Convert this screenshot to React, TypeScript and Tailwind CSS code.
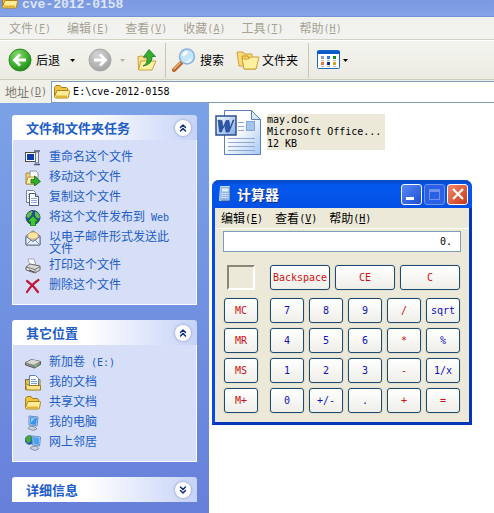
import React from 'react';
import { ChevronsDown, ChevronsUp } from 'lucide-react';

const Latin: React.FC<{ children: React.ReactNode }> = ({ children }) => (
  <span className="font-['DejaVu_Sans_Mono',monospace] text-[10px] whitespace-pre">{children}</span>
);

const MenuItem: React.FC<{ label: string; hotkey: string }> = ({ label, hotkey }) => (
  <button className="flex items-center whitespace-nowrap">
    {label}
    <Latin>
      (<u>{hotkey}</u>)
    </Latin>
  </button>
);

/* ---------- icons ---------- */

const FolderIcon = ({ className = 'w-4 h-4', viewBox = '0 0 16 16' }) => (
  <svg className={className} viewBox={viewBox}>
    <path d="M.5 12.500v-9l1.500-2h4l1.500 2h5l1 1v3" fill="#f0c440" stroke="#a87c14" />
    <path d="M3 6.500h12q.7 0 .5 1l-1 5.500q-.2 1-1 1H2q-1.500 0-1.500-1.500z" fill="#ffec96" stroke="#b0841a" />
    <path d="M2 12.500h11" stroke="#e3b32e" strokeWidth="2" />
  </svg>
);

const ArrowCircle = ({ forward = false }) => (
  <svg className="w-6 h-6 shrink-0" viewBox="0 0 24 24">
    <defs>
      <radialGradient id={forward ? 'circle-off' : 'circle-on'} cx="0.4" cy="0.3" r="0.8">
        <stop offset="0" stopColor={forward ? '#d6d6d6' : '#8cdc70'} />
        <stop offset="0.6" stopColor={forward ? '#b4b4b4' : '#3aac2c'} />
        <stop offset="1" stopColor={forward ? '#9a9a9a' : '#1c7a18'} />
      </radialGradient>
    </defs>
    <circle cx="12" cy="12" r="11" fill={forward ? 'url(#circle-off)' : 'url(#circle-on)'} stroke={forward ? '#a8a8a8' : '#2c8a24'} />
    {forward ? (
      <path d="M6 12h11M12 6.500l5.500 5.500-5.500 5.500" fill="none" stroke="#fff" strokeWidth="2.800" />
    ) : (
      <path d="M18 12H7M12 6.500 6.500 12l5.500 5.500" fill="none" stroke="#fff" strokeWidth="2.800" />
    )}
  </svg>
);

const Caret = ({ className = 'text-black' }) => (
  <svg className={`w-[5px] h-[3px] shrink-0 ${className}`} viewBox="0 0 5 3">
    <path d="M0 0h5L2.500 3z" fill="currentColor" />
  </svg>
);

const UpIcon = () => (
  <svg className="w-5 h-6 shrink-0" viewBox="0 0 20 24">
    <path d="M1 8.500 6 8l1 2h7v11H1.500z" fill="#f8e08a" stroke="#c9a33a" />
    <path d="M1.500 22 4 13h15l-4 9z" fill="#fff0a4" stroke="#c9a33a" />
    <path d="M6 18q5-2 4-9H6.500L12 1.500l6.500 7H15q.5 8-9 9.500z" fill="#35ae32" stroke="#15761a" strokeWidth="0.800" />
  </svg>
);

const SearchIcon = () => (
  <svg className="w-6 h-6 shrink-0" viewBox="0 0 24 24">
    <path d="m2 22 7-7" stroke="#b7682c" strokeWidth="4" strokeLinecap="round" />
    <path d="m2 21 6-6" stroke="#f0b070" strokeWidth="1.500" strokeLinecap="round" />
    <circle cx="15" cy="8.500" r="7.500" fill="#c4e6fb" stroke="#8bb0dc" strokeWidth="1.500" />
    <path d="M10 8q1-5 6-5-1 5-6 5z" fill="#fff" />
    <path d="M19 11q-2 3-5 3" stroke="#f2fbff" fill="none" strokeWidth="1.500" />
  </svg>
);

const FoldersIcon = () => (
  <svg className="w-6 h-6 shrink-0" viewBox="0 0 24 24">
    <path d="M1 4h6l1 2h8v12H3z" fill="#f9dc78" stroke="#cda038" />
    <path d="M6 8h6l1 2h7v11H8z" fill="#f6d260" stroke="#c79a30" />
    <path d="M6 10q5 3 9-1h8l-3 12H8z" fill="#fff0a0" stroke="#cda038" />
  </svg>
);

const ViewsIcon = () => (
  <svg className="w-6 h-5 shrink-0" viewBox="0 0 24 20">
    <rect x="0.500" y="0.500" width="22" height="18" rx="1" fill="#fff" stroke="#1c66c4" />
    <path d="M0 1h23v3H0z" fill="#0a5bcb" />
    <path d="M4 6h3v3H4z" fill="#9c94c4" />
    <path d="M10 6h3v3h-3z" fill="#2a78d8" />
    <path d="M16 6h3v3h-3z" fill="#138a1a" />
    <path d="M4 12h3v3H4z" fill="#ee7444" />
    <path d="M10 12h3v3h-3z" fill="#0b2a90" />
    <path d="M16 12h3v3h-3z" fill="#d5a01c" />
    <path d="M4 10.500h3m3 0h3m3 0h3M4 16.500h3m3 0h3m3 0h3" stroke="#b8b8b8" />
  </svg>
);

const RenameIcon = () => (
  <svg className="w-4 h-4" viewBox="0 0 16 16">
    <rect x="0.500" y="2.500" width="10" height="9" fill="#fff" stroke="#4a4a4a" />
    <rect x="2" y="4" width="7" height="6" fill="#0c3aa8" />
    <path d="M10.500 2v11h3V2z" fill="#e6ebf8" stroke="#6a7490" />
    <path d="M9 1h6M9 14.500h6" fill="none" stroke="#4c5878" strokeWidth="1.500" />
  </svg>
);

const MoveIcon = () => (
  <svg className="w-4 h-4" viewBox="0 0 16 16">
    <path d="M1 3h4l1 1h6v10H1z" fill="#f2d472" stroke="#a58a3c" />
    <path d="M5 1h6l2 2v6H5z" fill="#fff" stroke="#8a93a8" />
    <path d="M1 14 3 7h9l-2 7z" fill="#fdf0b0" stroke="#b5963e" />
    <path d="M6 9.500h3.500V6l6 5.500-6 4.500v-3H6z" fill="#2fae2a" stroke="#14701a" strokeWidth="0.800" />
  </svg>
);

const CopyIcon = () => (
  <svg className="w-4 h-4" viewBox="0 0 16 16">
    <path d="M1.500 .5h7l2 2v10h-9z" fill="#fff" stroke="#7483a8" />
    <path d="M4.500 3.500h6l3 3v9h-9z" fill="#fff" stroke="#4a5a88" />
    <path d="M10.500 3.500v3h3" fill="#c8d4ee" stroke="#4a5a88" />
    <path d="M6 8.500h6M6 10.500h6M6 12.500h6M3 4.500h1M3 6.500h1M3 8.500h1" stroke="#8fa6d6" />
  </svg>
);

const PublishIcon = () => (
  <svg className="w-4 h-4" viewBox="0 0 16 16">
    <circle cx="8" cy="7.500" r="7" fill="#245090" stroke="#284c78" />
    <path d="M1.500 5q3-4 6-4l-1 4-3 3-2-1zM10 1.500q4 1 5 6l-3 1-2-3z" fill="#5fc04c" />
    <path d="M8 6 13.500 11.500H10.500V16h-5v-4.500h-3z" fill="#3ec832" stroke="#14701a" strokeWidth="0.800" />
  </svg>
);

const MailIcon = () => (
  <svg className="w-4 h-4" viewBox="0 0 16 16">
    <path d="M1 6 8 .8 15 6v9H1z" fill="#b9cdf0" stroke="#64748f" />
    <path d="M3 4q5-4 10 0v5H3z" fill="#ffe6a4" stroke="#d49a4c" strokeWidth="0.800" />
    <path d="M1 15V6.500l7 5 7-5V15z" fill="#e6effc" stroke="#64748f" />
    <path d="m1 15 5-5m9 5-5-5" stroke="#7f90ae" />
  </svg>
);

const PrintIcon = () => (
  <svg className="w-4 h-4" viewBox="0 0 16 16">
    <path d="M3 1h6l2 6H5z" fill="#fff" stroke="#a0a8bc" />
    <path d="m1 9 4-3 10 2v4l-5 3-9-3z" fill="#d9d9d6" stroke="#6c6c6c" />
    <path d="m1 9 9 2.500 5-3M10 11.500V15" fill="none" stroke="#777" />
    <path d="m4 12 5 2" stroke="#444" />
  </svg>
);

const DeleteIcon = () => (
  <svg className="w-4 h-4" viewBox="0 0 16 16">
    <path d="M2 3q6 4 11 11M13.500 2Q7 6 2 14" fill="none" stroke="#c01838" strokeWidth="2.200" strokeLinecap="round" />
  </svg>
);

const DriveIcon = () => (
  <svg className="w-4 h-4" viewBox="0 0 16 16">
    <path d="m0.500 7.500 6-3 9 2v3l-6 3.500-9-3z" fill="#8c8c88" stroke="#5d5d5d" />
    <path d="m1 7.500 6-3 8 2-6 3.200z" fill="#d8d8d4" />
    <path d="m10 11 2-1" stroke="#5ae04c" strokeWidth="1.500" />
  </svg>
);

const DocumentsIcon = () => (
  <svg className="w-4 h-4" viewBox="0 0 16 16">
    <path d="M.5 4.500h4v10h-4z" fill="#e8c04c" stroke="#8c6a18" />
    <path d="M11 4.500h4v8h-4z" fill="#f4d668" stroke="#a07a1c" />
    <path d="M4.500 .5h6l3 3v9h-9z" fill="#fff" stroke="#5a82b8" />
    <path d="M6 4.500h5M6 6.500h6M6 8.500h6" stroke="#74a0dc" />
    <path d="M.5 8.500 4 10.500h11.500v4.500H1.500z" fill="#fbe48c" stroke="#a07a1c" />
  </svg>
);

const ComputerIcon = () => (
  <svg className="w-4 h-4" viewBox="0 0 16 16">
    <path d="m4 1 9 1-1 9-8-1z" fill="#dfe8f8" stroke="#6a88bc" />
    <path d="m5 2 7 .8-.8 7.200-6-.8z" fill="#3894ee" />
    <path d="m6 3 4 .5-4 4z" fill="#8cd0ff" />
    <path d="m5 11 5 1 2 2-4 1.500-5-2z" fill="#c9cfdd" stroke="#7884a0" strokeWidth="0.800" />
  </svg>
);

const NetworkIcon = () => (
  <svg className="w-4 h-4" viewBox="0 0 16 16">
    <circle cx="4.500" cy="5" r="4.300" fill="#1f5cac" stroke="#24507c" strokeWidth="0.800" />
    <path d="M.5 4q2-4 6-3l-1 6-3 1z" fill="#3fac34" />
    <path d="m7 1 8.500 1-1 9-7-1z" fill="#dfe8f8" stroke="#6a88bc" />
    <path d="m8 2 6.500.8-.8 7.200-5.200-.8z" fill="#48a2f2" />
    <path d="m6 12 5-1 3 2.500-4 2-5-2z" fill="#c9cfdd" stroke="#7884a0" strokeWidth="0.800" />
  </svg>
);

const WordDocIcon = () => (
  <svg className="w-[46px] h-[46px] shrink-0" viewBox="0 0 46 46">
    <defs>
      <linearGradient id="doc-page" x1="0" y1="0" x2="1" y2="1">
        <stop offset="0.400" stopColor="#fff" />
        <stop offset="1" stopColor="#a8c8f4" />
      </linearGradient>
      <linearGradient id="doc-badge" x1="0" y1="0" x2="1" y2="1">
        <stop offset="0" stopColor="#fff" />
        <stop offset="1" stopColor="#7fa8e4" />
      </linearGradient>
    </defs>
    <path d="M9.500 .5h27l9 9v35h-36z" fill="url(#doc-page)" stroke="#5b7fb4" />
    <path d="M36.500 .5v9h9z" fill="#dbe8fa" stroke="#5b7fb4" />
    <path d="M23 12.500h6m-6 4h6m-6 4h6M13 28.500h27M13 32.500h27M13 36.500h27M13 40.500h27" stroke="#92a8d4" />
    <rect x="31.500" y="11.500" width="8" height="9" fill="#a4c4ee" stroke="#84a6dc" />
    <rect x="1" y="6" width="20" height="19" fill="url(#doc-badge)" stroke="#2a4f94" strokeWidth="1.500" />
    <path d="m3 10 4 .5 1 7.500 3-7.500h3l1 7.500 3-8h1l-5 12h-3l-1.500-7L6.500 22h-2z" fill="#2b57a8" stroke="#1c3f88" strokeWidth="0.600" />
  </svg>
);

const CalcIcon = () => (
  <svg className="w-4 h-4 shrink-0" viewBox="0 0 16 16">
    <path d="M3.500 .5h9v14h-10z" fill="#8fb4ea" stroke="#c8dcf8" />
    <path d="M5 2.500h6.500v3H5z" fill="#dff0ff" />
    <path d="M4.500 7.500h7M4.500 9.500h7M4.500 11.500h7" stroke="#f2f8ff" strokeDasharray="2 1" />
    <path d="M13 1v14H4" stroke="#24509c" fill="none" />
  </svg>
);

/* ---------- side panel ---------- */

interface TaskPanelProps {
  title: string;
  open?: boolean;
  children?: React.ReactNode;
}

const TaskPanel: React.FC<TaskPanelProps> = ({ title, open = true, children }) => (
  <section>
    <button
      aria-expanded={open}
      className="w-full h-[25px] pl-3.5 pr-1.5 flex items-center justify-between rounded-t-[3px] bg-linear-to-r from-white from-40% to-[#c6d3f7] text-[13px] font-bold text-[#215dc6]"
    >
      {title}
      <span className="w-4 h-4 rounded-full bg-white flex items-center justify-center shadow-[0_0_2px_1px_#a8b4d8] text-[#10307c]">
        {open ? <ChevronsUp size={12} strokeWidth={3} /> : <ChevronsDown size={12} strokeWidth={3} />}
      </span>
    </button>
    {open && (
      <ul className="flex flex-col gap-1 bg-[#d6dff7] border border-t-0 border-white px-3 py-2.5 text-[12px] leading-[12px] text-[#215dc6]">
        {children}
      </ul>
    )}
  </section>
);

const Task: React.FC<{ icon: React.ReactNode; children: React.ReactNode }> = ({ icon, children }) => (
  <li>
    <a href="#" className="flex gap-2 min-h-4">
      <span className="w-4 h-4 shrink-0">{icon}</span>
      <span className="max-w-[125px]">{children}</span>
    </a>
  </li>
);

/* ---------- calculator ---------- */

const KEYS = [
  ['7', '8', '9', '/', 'sqrt'],
  ['4', '5', '6', '*', '%'],
  ['1', '2', '3', '-', '1/x'],
  ['0', '+/-', '.', '+', '='],
];
const MEMORY = ['MC', 'MR', 'MS', 'M+'];
const OPERATORS = ['/', '*', '-', '+', '='];

const Key: React.FC<{ label: string; red?: boolean }> = ({ label, red }) => (
  <button
    className={`h-[25px] w-full flex items-center justify-center rounded-[3px] border border-[#1c4a70] bg-linear-to-b from-white to-[#efeee8] shadow-[0_0_0_1px_#e0dfd2] font-['DejaVu_Sans_Mono',monospace] text-[10px] ${
      red ? 'text-[#d01010]' : 'text-[#1010c0]'
    }`}
  >
    {label}
  </button>
);

const Calculator = () => (
  <div className="absolute left-[212px] top-[180px] w-[260px] rounded-t-[7px] border-3 border-t-0 border-l-[#0a4ae4] border-r-[#0636b8] border-b-[#0636b8] bg-[#ece9d8]">
    <div className="-mx-[3px] h-7 pl-[5px] pr-1 flex items-center gap-1 rounded-t-[7px] bg-linear-to-b from-[#0a46c0] via-[#0458ee] via-20% to-[#0450e4] text-white">
      <CalcIcon />
      <h2 className="flex-1 text-[14px] font-bold leading-[16px] [text-shadow:1px_1px_#0a2a80]">计算器</h2>
      <div className="flex gap-[2px]">
        <button aria-label="最小化" className="w-[21px] h-[21px] rounded-[3px] border border-white bg-linear-to-br from-[#5a88f4] to-[#1c4cd4] flex items-end p-1">
          <span className="w-2 h-[3px] bg-white" />
        </button>
        <button aria-label="最大化" disabled className="w-[21px] h-[21px] rounded-[3px] border border-[#6c92ee] bg-[#2a60e4] flex items-center justify-center">
          <span className="w-[11px] h-[11px] border border-t-3 border-[#6e90ec]" />
        </button>
        <button aria-label="关闭" className="w-[21px] h-[21px] rounded-[3px] border border-white bg-linear-to-br from-[#f08868] to-[#c83410] flex items-center justify-center">
          <svg className="w-3 h-3" viewBox="0 0 12 12">
            <path d="m1 1 10 10M11 1 1 11" stroke="#fff" strokeWidth="2.200" />
          </svg>
        </button>
      </div>
    </div>
    <nav className="h-[21px] pl-1.5 flex items-center gap-3 border-b border-white text-[12px]">
      <MenuItem label="编辑" hotkey="E" />
      <MenuItem label="查看" hotkey="V" />
      <MenuItem label="帮助" hotkey="H" />
    </nav>
    <div className="px-2 pt-[2px] pb-[9px]">
      <input
        aria-label="显示"
        readOnly
        value="0."
        className="block w-full h-[21px] mb-[13px] pr-2 bg-white border border-[#7f9db9] text-right font-['DejaVu_Sans_Mono',monospace] text-[10px] outline-none"
      />
      <div className="px-px flex flex-col gap-2">
        <div className="flex gap-3">
          <div className="w-[34px] px-[3px]">
            <div className="h-[25px] border-2 border-[#8a877a] border-r-white border-b-white" />
          </div>
          <div className="flex-1 grid grid-cols-3 gap-[5px]">
            <Key label="Backspace" red />
            <Key label="CE" red />
            <Key label="C" red />
          </div>
        </div>
        <div className="flex gap-3">
          <div className="w-[34px] flex flex-col gap-[5px]">
            {MEMORY.map((m) => (
              <Key key={m} label={m} red />
            ))}
          </div>
          <div className="flex-1 grid grid-cols-5 gap-[5px]">
            {KEYS.flat().map((k) => (
              <Key key={k} label={k} red={OPERATORS.includes(k)} />
            ))}
          </div>
        </div>
      </div>
    </div>
  </div>
);

export default function App() {
  return (
    <div className="relative min-h-screen flex flex-col bg-white font-['Noto_Sans_CJK_SC',sans-serif] text-black">
      <header className="h-[17px] flex items-start gap-1 pl-[2px] overflow-hidden bg-linear-to-b from-[#7b98e0] to-[#84a4ea] border-b border-[#7690d4]">
        <FolderIcon className="w-4 h-[9px]" viewBox="0 6 16 9" />
        <h1 className="font-['Liberation_Mono',monospace] text-[13px] leading-[10px] font-bold text-[#dde6fa]">cve-2012-0158</h1>
      </header>

      <nav className="h-[23px] pl-[9px] flex items-center gap-4 bg-[#f2f2ef] border-b border-[#d4d1c4] text-[12px] text-[#a5a294]">
        <MenuItem label="文件" hotkey="F" />
        <MenuItem label="编辑" hotkey="E" />
        <MenuItem label="查看" hotkey="V" />
        <MenuItem label="收藏" hotkey="A" />
        <MenuItem label="工具" hotkey="T" />
        <MenuItem label="帮助" hotkey="H" />
      </nav>

      <div className="h-10 pl-2 flex items-center bg-linear-to-b from-[#f4f4f0] to-[#ecebe2] border-t border-t-white border-b border-b-[#cdcabb] text-[12px]">
        <button className="flex items-center gap-1">
          <ArrowCircle />
          后退
        </button>
        <button aria-label="后退历史" className="px-2.5">
          <Caret />
        </button>
        <button aria-label="前进" className="ml-[3px]">
          <ArrowCircle forward />
        </button>
        <button aria-label="前进历史" className="px-2">
          <Caret className="text-[#b4b2a8]" />
        </button>
        <button aria-label="向上" className="ml-1">
          <UpIcon />
        </button>
        <span className="w-px h-[35px] ml-2 mr-1.5 bg-[#c9c6b8]" />
        <button className="flex items-center gap-1">
          <SearchIcon />
          搜索
        </button>
        <button className="ml-3 flex items-center gap-[2px]">
          <FoldersIcon />
          文件夹
        </button>
        <span className="w-px h-[35px] ml-2.5 mr-2 bg-[#c9c6b8]" />
        <button aria-label="查看方式" className="flex items-center gap-[2px]">
          <ViewsIcon />
          <Caret />
        </button>
      </div>

      <div className="h-[23px] pl-[5px] flex items-center gap-1 bg-[#f0efe8] text-[12px]">
        <label htmlFor="address" className="flex items-center text-[#7c7a70] whitespace-nowrap">
          地址
          <Latin>
            (<u>D</u>)
          </Latin>
        </label>
        <div className="flex-1 h-[22px] pl-[2px] flex items-center gap-[3px] bg-white border border-r-0 border-[#7f9db9]">
          <FolderIcon />
          <input
            id="address"
            defaultValue="E:\cve-2012-0158"
            className="flex-1 font-['DejaVu_Sans_Mono',monospace] text-[10px] outline-none"
          />
        </div>
      </div>

      <div className="flex-1 flex">
        <aside className="w-[209px] shrink-0 px-3 pt-3 pb-[11px] flex flex-col gap-[15px] bg-linear-to-b from-[#7ba2e7] to-[#6780da]">
          <TaskPanel title="文件和文件夹任务">
            <Task icon={<RenameIcon />}>重命名这个文件</Task>
            <Task icon={<MoveIcon />}>移动这个文件</Task>
            <Task icon={<CopyIcon />}>复制这个文件</Task>
            <Task icon={<PublishIcon />}>
              将这个文件发布到<Latin> Web</Latin>
            </Task>
            <Task icon={<MailIcon />}>以电子邮件形式发送此文件</Task>
            <Task icon={<PrintIcon />}>打印这个文件</Task>
            <Task icon={<DeleteIcon />}>删除这个文件</Task>
          </TaskPanel>
          <TaskPanel title="其它位置">
            <Task icon={<DriveIcon />}>
              新加卷<Latin> (E:)</Latin>
            </Task>
            <Task icon={<DocumentsIcon />}>我的文档</Task>
            <Task icon={<FolderIcon />}>共享文档</Task>
            <Task icon={<ComputerIcon />}>我的电脑</Task>
            <Task icon={<NetworkIcon />}>网上邻居</Task>
          </TaskPanel>
          <TaskPanel title="详细信息" open={false} />
        </aside>

        <main className="flex-1 pl-1.5 pt-[7px]">
          <a href="#" className="inline-flex items-start gap-1.5">
            <WordDocIcon />
            <span className="mt-1 w-[118px] bg-[#ece9d8] font-['DejaVu_Sans_Mono',monospace] text-[10px] leading-[12px]">
              <span className="block">may.doc</span>
              <span className="block">Microsoft Office...</span>
              <span className="block">12 KB</span>
            </span>
          </a>
        </main>
      </div>

      <Calculator />
    </div>
  );
}
